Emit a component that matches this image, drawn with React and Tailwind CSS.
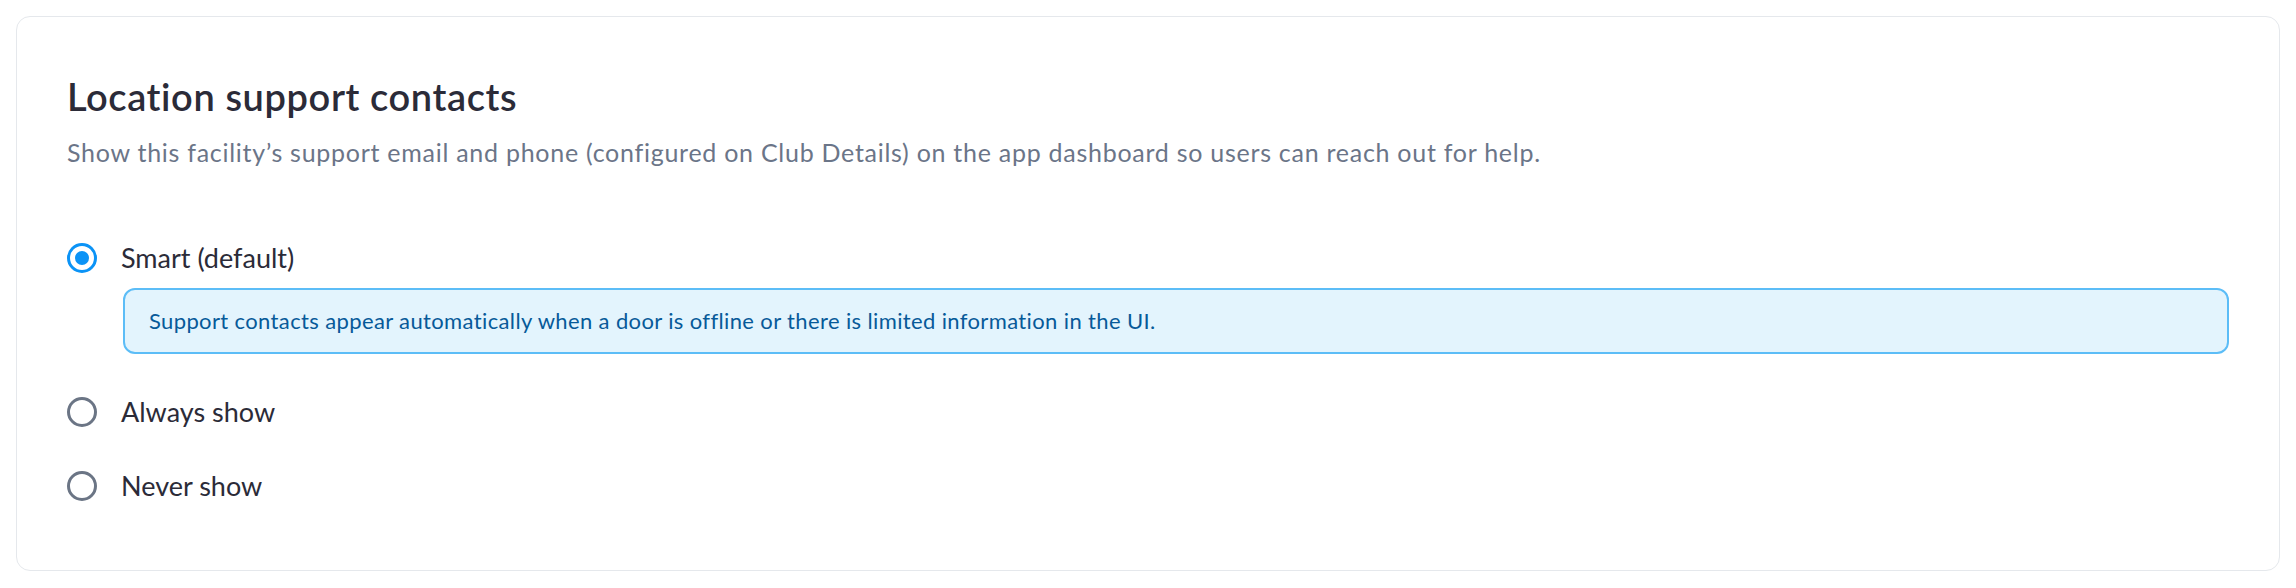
import { useState } from 'react'

const options = [
  {
    id: 'smart',
    label: 'Smart (default)',
    hint: 'Support contacts appear automatically when a door is offline or there is limited information in the UI.'
  },
  { id: 'always', label: 'Always show' },
  { id: 'never', label: 'Never show' }
]

function Radio({ checked }) {
  return (
    <span
      className={`flex h-[30px] w-[30px] shrink-0 items-center justify-center rounded-full border-[3px] ${
        checked ? 'border-[#0b93f6]' : 'border-[#6b7585]'
      }`}
    >
      {checked && <span className="h-[14px] w-[14px] rounded-full bg-[#0b93f6]" />}
    </span>
  )
}

export default function App() {
  const [mode, setMode] = useState('smart')

  return (
    <div className="bg-white p-[16px] font-['Lato',sans-serif]">
      <section className="rounded-[14px] border border-[#e5e8ec] bg-white px-[50px] pt-[57px] pb-[66px]">
        <h2 className="text-[38px] font-semibold leading-[44px] tracking-[0.6px] text-[#2b2b38]">
          Location support contacts
        </h2>
        <p className="mt-[18px] text-[25px] leading-[32px] tracking-[0.73px] text-[#6b7588]">
          Show this facility’s support email and phone (configured on Club Details) on the app dashboard so users can reach out for help.
        </p>

        {/* 옵션 */}
        <div className="mt-[72px] flex flex-col gap-[38px]">
          {options.map(opt => (
            <div key={opt.id}>
              <button
                onClick={() => setMode(opt.id)}
                className="flex items-center gap-[24px] text-left"
              >
                <Radio checked={mode === opt.id} />
                <span className="text-[27px] leading-[36px] text-[#2b2b38]">{opt.label}</span>
              </button>
              {opt.hint && mode === opt.id && (
                <div className="mb-[2px] ml-[56px] mt-[12px] rounded-[12px] border-2 border-[#5cbdf7] bg-[#e3f4fd] px-[24px] py-[17px] text-[22px] leading-[28px] tracking-[0.37px] text-[#075a99]">
                  {opt.hint}
                </div>
              )}
            </div>
          ))}
        </div>
      </section>
    </div>
  )
}
